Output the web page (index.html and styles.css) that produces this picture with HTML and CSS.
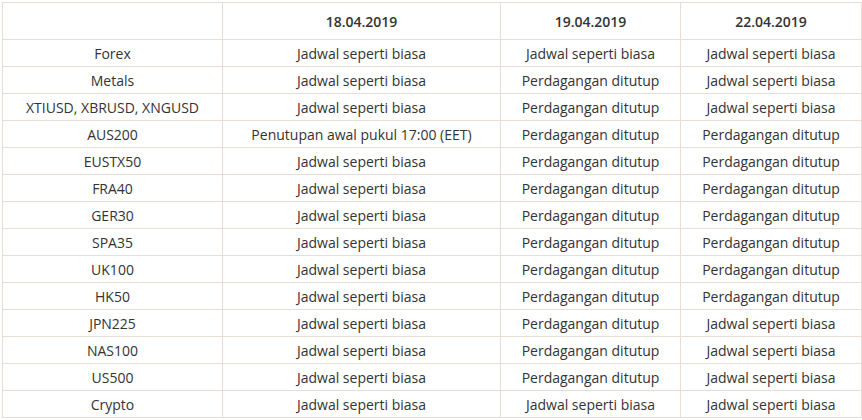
FILE: index.html
```html
<!DOCTYPE html>
<html>
<head>
<meta charset="utf-8">
<link rel="stylesheet" href="styles.css">
</head>
<body>
<table class="sched">
  <colgroup>
    <col class="c1"><col class="c2"><col class="c3"><col class="c4">
  </colgroup>
  <thead>
    <tr><th></th><th>18.04.2019</th><th>19.04.2019</th><th>22.04.2019</th></tr>
  </thead>
  <tbody>
    <tr><td>Forex</td><td>Jadwal seperti biasa</td><td>Jadwal seperti biasa</td><td>Jadwal seperti biasa</td></tr>
    <tr><td>Metals</td><td>Jadwal seperti biasa</td><td>Perdagangan ditutup</td><td>Jadwal seperti biasa</td></tr>
    <tr><td>XTIUSD, XBRUSD, XNGUSD</td><td>Jadwal seperti biasa</td><td>Perdagangan ditutup</td><td>Jadwal seperti biasa</td></tr>
    <tr><td>AUS200</td><td>Penutupan awal pukul 17:00 (EET)</td><td>Perdagangan ditutup</td><td>Perdagangan ditutup</td></tr>
    <tr><td>EUSTX50</td><td>Jadwal seperti biasa</td><td>Perdagangan ditutup</td><td>Perdagangan ditutup</td></tr>
    <tr><td>FRA40</td><td>Jadwal seperti biasa</td><td>Perdagangan ditutup</td><td>Perdagangan ditutup</td></tr>
    <tr><td>GER30</td><td>Jadwal seperti biasa</td><td>Perdagangan ditutup</td><td>Perdagangan ditutup</td></tr>
    <tr><td>SPA35</td><td>Jadwal seperti biasa</td><td>Perdagangan ditutup</td><td>Perdagangan ditutup</td></tr>
    <tr><td>UK100</td><td>Jadwal seperti biasa</td><td>Perdagangan ditutup</td><td>Perdagangan ditutup</td></tr>
    <tr><td>HK50</td><td>Jadwal seperti biasa</td><td>Perdagangan ditutup</td><td>Perdagangan ditutup</td></tr>
    <tr><td>JPN225</td><td>Jadwal seperti biasa</td><td>Perdagangan ditutup</td><td>Jadwal seperti biasa</td></tr>
    <tr><td>NAS100</td><td>Jadwal seperti biasa</td><td>Perdagangan ditutup</td><td>Jadwal seperti biasa</td></tr>
    <tr><td>US500</td><td>Jadwal seperti biasa</td><td>Perdagangan ditutup</td><td>Jadwal seperti biasa</td></tr>
    <tr><td>Crypto</td><td>Jadwal seperti biasa</td><td>Jadwal seperti biasa</td><td>Jadwal seperti biasa</td></tr>
  </tbody>
</table>
</body>
</html>
```
FILE: styles.css
```css
html, body {
  margin: 0;
  padding: 0;
  background: #fff;
}
body {
  padding: 2px 0 0 2px;
  font-family: "Open Sans", "Liberation Sans", sans-serif;
  font-size: 14px;
  color: #333;
}
.sched {
  border-collapse: collapse;
  table-layout: fixed;
  width: 859px;
}
.c1 { width: 220px; }
.c2 { width: 278px; }
.c3 { width: 180px; }
.c4 { width: 181px; }
.sched th, .sched td {
  border: 1px solid #e8ddd6;
  text-align: center;
  padding: 0;
  white-space: nowrap;
  line-height: 19px;
}
.sched th {
  height: 36px;
  font-weight: 600;
}
.sched td {
  height: 26px;
}
```
